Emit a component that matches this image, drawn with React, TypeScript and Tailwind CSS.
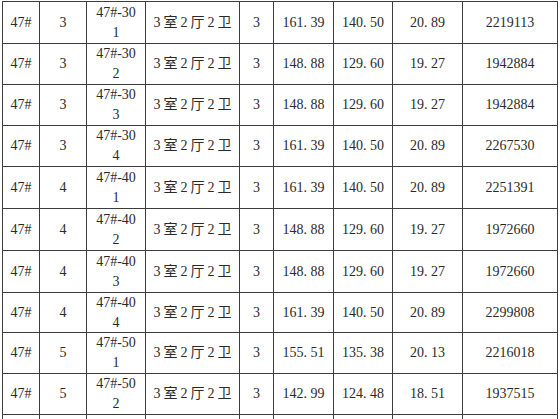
const rows = [
  ["47#", "3", "47#-301", "161.39", "140.50", "20.89", "2219113"],
  ["47#", "3", "47#-302", "148.88", "129.60", "19.27", "1942884"],
  ["47#", "3", "47#-303", "148.88", "129.60", "19.27", "1942884"],
  ["47#", "3", "47#-304", "161.39", "140.50", "20.89", "2267530"],
  ["47#", "4", "47#-401", "161.39", "140.50", "20.89", "2251391"],
  ["47#", "4", "47#-402", "148.88", "129.60", "19.27", "1972660"],
  ["47#", "4", "47#-403", "148.88", "129.60", "19.27", "1972660"],
  ["47#", "4", "47#-404", "161.39", "140.50", "20.89", "2299808"],
  ["47#", "5", "47#-501", "155.51", "135.38", "20.13", "2216018"],
  ["47#", "5", "47#-502", "142.99", "124.48", "18.51", "1937515"],
]

const cell =
  "flex items-center justify-center border-r border-b border-[#3c3c3c] text-center"

// SimSun draws the decimal point half an em wide
function Num({ value }: { value: string }) {
  const [a, b] = value.split(".")
  return (
    <span>
      {a}
      <span className="inline-block w-[7px] text-left">.</span>
      {b}
    </span>
  )
}

export default function App() {
  return (
    <div
      className="h-[419px] w-[560px] overflow-hidden bg-white text-[14px] leading-[20px] text-[#2a2a2a]"
      style={{ fontFamily: '"Liberation Serif", "Noto Sans CJK SC", serif' }}
    >
      <div className="ml-[2px] mt-[1px] grid w-max grid-cols-[37px_47px_59px_94px_34px_60px_59px_70px_95px] grid-rows-[42px_41px_41px_41px_42px_42px_42px_40px_41px_41px_41px] border-l border-t border-[#3c3c3c]">
        {rows.map((r, i) => (
          <div key={i} className="contents">
            <div className={cell}>{r[0]}</div>
            <div className={cell}>{r[1]}</div>
            <div className={cell}>
              <span className="block w-[44px] break-all">{r[2]}</span>
            </div>
            <div className={cell}>
              <span className="pl-[3px] tracking-[3px]">3室2厅2卫</span>
            </div>
            <div className={cell}>3</div>
            <div className={cell}>
              <Num value={r[3]} />
            </div>
            <div className={cell}>
              <Num value={r[4]} />
            </div>
            <div className={cell}>
              <Num value={r[5]} />
            </div>
            <div className={cell}>{r[6]}</div>
          </div>
        ))}
        {/* next row starts at the bottom edge, its text is out of view */}
        {Array.from({ length: 9 }).map((_, i) => (
          <div key={`tail-${i}`} className={cell} />
        ))}
      </div>
    </div>
  )
}
